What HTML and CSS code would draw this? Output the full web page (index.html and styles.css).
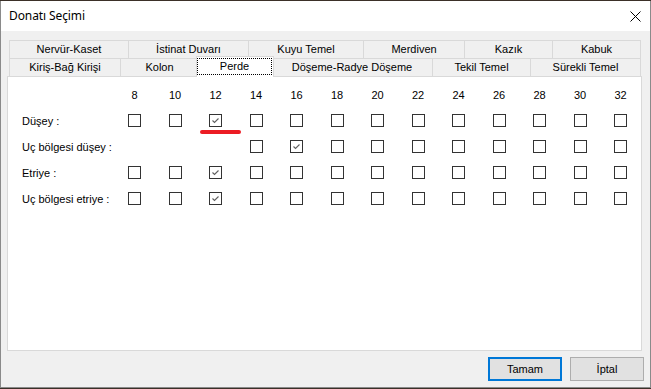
FILE: index.html
```html
<!DOCTYPE html>
<html lang="tr">
<head>
<meta charset="utf-8">
<title>Donatı Seçimi</title>
<link rel="stylesheet" href="styles.css">
</head>
<body>
<div class="window">
  <div class="titlebar">
    <span class="title">Donatı Seçimi</span>
    <svg class="close" width="11" height="11" viewBox="0 0 11 11"><path d="M0.5 0.5 L10.5 10.5 M10.5 0.5 L0.5 10.5" stroke="#000" stroke-width="1" fill="none"/></svg>
  </div>
  <div class="body">
    <div class="tabs">
      <div class="row">
        <div class="tab w-nervur">Nervür-Kaset</div>
        <div class="tab w-istinat">İstinat Duvarı</div>
        <div class="tab w-kuyu">Kuyu Temel</div>
        <div class="tab w-merdiven">Merdiven</div>
        <div class="tab w-kazik">Kazık</div>
        <div class="tab w-kabuk last">Kabuk</div>
      </div>
      <div class="row">
        <div class="tab w-kiris">Kiriş-Bağ Kirişi</div>
        <div class="tab w-kolon">Kolon</div>
        <div class="tab selected"><span class="focus">Perde</span></div>
        <div class="tab w-doseme">Döşeme-Radye Döşeme</div>
        <div class="tab w-tekil">Tekil Temel</div>
        <div class="tab w-surekli last">Sürekli Temel</div>
      </div>
    </div>
    <div class="panel">
      <div class="grid">
        <div></div>
        <div class="num">8</div><div class="num">10</div><div class="num">12</div><div class="num">14</div><div class="num">16</div><div class="num">18</div><div class="num">20</div><div class="num">22</div><div class="num">24</div><div class="num">26</div><div class="num">28</div><div class="num">30</div><div class="num">32</div>

        <div class="label">Düşey :</div>
        <div class="cb"></div><div class="cb"></div><div class="cb checked"><svg viewBox="0 0 13 13" width="13" height="13"><polyline points="3.5,6.5 5.5,8.5 9.5,4.5" fill="none" stroke="#606060" stroke-width="1.1"/></svg></div><div class="cb"></div><div class="cb"></div><div class="cb"></div><div class="cb"></div><div class="cb"></div><div class="cb"></div><div class="cb"></div><div class="cb"></div><div class="cb"></div><div class="cb"></div>

        <div class="label">Uç bölgesi düşey :</div>
        <div></div><div></div><div></div><div class="cb"></div><div class="cb checked"><svg viewBox="0 0 13 13" width="13" height="13"><polyline points="3.5,6.5 5.5,8.5 9.5,4.5" fill="none" stroke="#606060" stroke-width="1.1"/></svg></div><div class="cb"></div><div class="cb"></div><div class="cb"></div><div class="cb"></div><div class="cb"></div><div class="cb"></div><div class="cb"></div><div class="cb"></div>

        <div class="label">Etriye :</div>
        <div class="cb"></div><div class="cb"></div><div class="cb checked"><svg viewBox="0 0 13 13" width="13" height="13"><polyline points="3.5,6.5 5.5,8.5 9.5,4.5" fill="none" stroke="#606060" stroke-width="1.1"/></svg></div><div class="cb"></div><div class="cb"></div><div class="cb"></div><div class="cb"></div><div class="cb"></div><div class="cb"></div><div class="cb"></div><div class="cb"></div><div class="cb"></div><div class="cb"></div>

        <div class="label">Uç bölgesi etriye :</div>
        <div class="cb"></div><div class="cb"></div><div class="cb checked"><svg viewBox="0 0 13 13" width="13" height="13"><polyline points="3.5,6.5 5.5,8.5 9.5,4.5" fill="none" stroke="#606060" stroke-width="1.1"/></svg></div><div class="cb"></div><div class="cb"></div><div class="cb"></div><div class="cb"></div><div class="cb"></div><div class="cb"></div><div class="cb"></div><div class="cb"></div><div class="cb"></div><div class="cb"></div>
      </div>
      <div class="redmark"></div>
    </div>
    <div class="buttons">
      <div class="btn default">Tamam</div>
      <div class="btn">İptal</div>
    </div>
  </div>
</div>
</body>
</html>
```

FILE: styles.css
```css
html, body {
  margin: 0;
  padding: 0;
}
body {
  background: #3b3028;
  width: 651px;
  height: 389px;
  overflow: hidden;
}
.window {
  margin-top: 1px;
  width: 651px;
  height: 387px;
  box-sizing: border-box;
  border-left: 1px solid #8a8a8a;
  border-right: 1px solid #8a8a8a;
  border-bottom: 1px solid #8a8a8a;
  background: #f0f0f0;
  font-family: "Liberation Sans", Arial, sans-serif;
  font-size: 11px;
  color: #000;
}
.titlebar {
  height: 30px;
  background: #fff;
  display: flex;
  align-items: center;
  justify-content: space-between;
  padding: 0 9px 0 8px;
}
.title {
  font-family: "Noto Sans", "Open Sans", sans-serif;
  font-size: 12px;
  letter-spacing: -0.1px;
  padding-bottom: 1px;
}
.close {
  display: block;
}
.body {
  padding: 9px 0 0 6px;
}
.tabs {
  margin-left: 2px;
  width: 632px;
}
.row {
  display: flex;
  height: 18px;
  align-items: flex-start;
}
.tab {
  box-sizing: border-box;
  height: 18px;
  border-top: 1px solid #d9d9d9;
  border-left: 1px solid #d9d9d9;
  background: #f0f0f0;
  text-align: center;
  line-height: 17px;
  white-space: nowrap;
}
.tab.last {
  border-right: 1px solid #d9d9d9;
}
.w-nervur { width: 119px; }
.w-istinat { width: 120px; }
.w-kuyu { width: 115px; }
.w-merdiven { width: 101px; }
.w-kazik { width: 88px; }
.w-kabuk { width: 89px; }
.w-kiris { width: 111px; }
.w-kolon { width: 78px; }
.w-doseme { width: 161px; }
.w-tekil { width: 98px; }
.w-surekli { width: 111px; }
.tab.selected {
  position: relative;
  z-index: 1;
  width: 78px;
  height: 21px;
  margin: -2px -3px 0 -2px;
  border: 1px solid #d9d9d9;
  border-bottom: none;
  background: #fff;
  line-height: 15px;
}
.focus {
  display: block;
  box-sizing: border-box;
  height: 17px;
  margin: 1px 1px 0 0;
  border: 1px dotted #000;
}
.panel {
  position: relative;
  box-sizing: border-box;
  width: 635px;
  height: 275px;
  border: 1px solid #d9d9d9;
  background: #fff;
  padding: 5px 0 0 14px;
}
.grid {
  display: grid;
  grid-template-columns: 106px repeat(13, 40.5px);
  grid-auto-rows: 26px;
}
.num {
  width: 13px;
  display: flex;
  justify-content: center;
  align-self: center;
  line-height: 13px;
  white-space: nowrap;
}
.label {
  align-self: center;
  line-height: 13px;
  white-space: nowrap;
}
.cb {
  box-sizing: border-box;
  width: 13px;
  height: 13px;
  margin-top: 6px;
  border: 1px solid #333;
  background: #fff;
  position: relative;
}
.cb svg {
  position: absolute;
  left: -1px;
  top: -1px;
}
.redmark {
  position: absolute;
  left: 192px;
  top: 53px;
  width: 41px;
  height: 4px;
  border-radius: 2px;
  background: #ec1c24;
}
.buttons {
  display: flex;
  justify-content: flex-end;
  gap: 8px;
  margin: 6px 6px 0 0;
}
.btn {
  box-sizing: border-box;
  width: 74px;
  height: 24px;
  border: 1px solid #adadad;
  background: #e1e1e1;
  display: flex;
  align-items: center;
  justify-content: center;
}
.btn.default {
  border: 2px solid #0078d7;
}
```
